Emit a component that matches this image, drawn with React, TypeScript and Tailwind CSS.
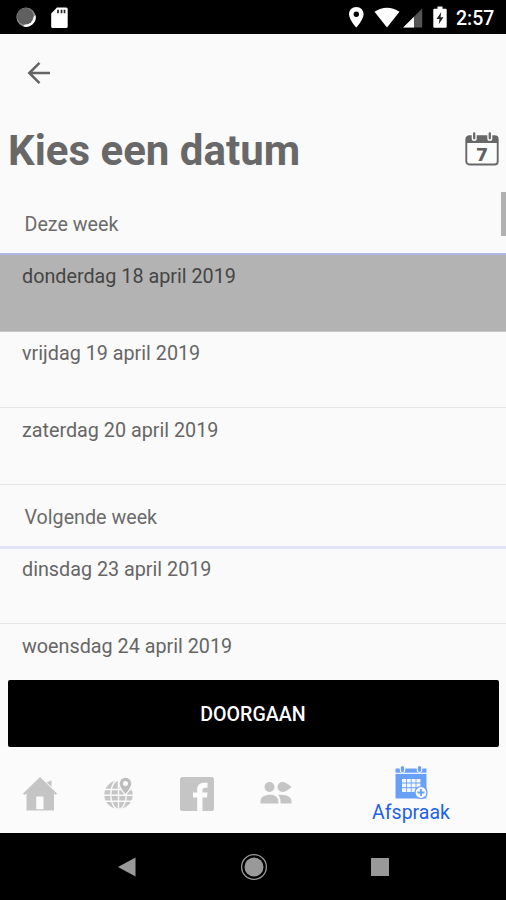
import React from "react";

function StatusBar() {
  return (
    <header className="h-[34px] shrink-0 bg-black flex items-center justify-between pl-4 pr-[10px] text-white">
      <svg width="54" height="34" viewBox="0 0 54 34">
        <circle cx="10" cy="17.2" r="9.6" fill="#8c8c8c" />
        <path d="M19.500 15A9.600 9.600 0 0 1 7 26.300Z" fill="#fff" />
        <circle cx="9.3" cy="16.3" r="8.3" fill="#606060" />
        <path d="M41 7.5H50.200Q51.700 7.500 51.700 9V26.500Q51.700 28 50.200 28H36.700Q35.200 28 35.200 26.500V13.500Z" fill="#fff" />
        <path d="M42 9.800v3.500M45.500 9.800v3.500M48.500 9.800v3.500" stroke="#222" strokeWidth="1.700" />
      </svg>
      <div className="flex items-center">
        <svg width="108" height="34" viewBox="0 0 108 34">
          <path fillRule="evenodd" d="M8.300 7C4 7 1 10.200 1 14.200C1 19.500 8.300 27.500 8.300 27.500S15.600 19.500 15.600 14.200C15.600 10.200 12.600 7 8.300 7ZM8.300 11.500A2.700 2.700 0 1 1 8.300 16.900A2.700 2.700 0 1 1 8.300 11.500Z" fill="#fff" />
          <path d="M26.500 11.800Q39 3.500 51.500 11.800L39 27.500Z" fill="#fff" />
          <path d="M74.200 8.500V27.500H55.200Z" fill="#555" />
          <path d="M66 16.700V27.500H55.200Z" fill="#fff" />
          <path d="M89.500 6.500h5v2.300h3.200q1 0 1 1v17q0 1-1 1h-11.400q-1 0-1-1v-17q0-1 1-1h3.200Z" fill="#fff" />
          <path d="M93.300 12L88.500 19h3l-.8 5.300L95.500 17.300h-3Z" fill="#222" />
        </svg>
        <span className="text-[19.500px] leading-[34px] font-medium pt-[4px] w-[40px] whitespace-nowrap">2:57</span>
      </div>
    </header>
  );
}

function CalendarSeven() {
  return (
    <svg width="34" height="34" viewBox="0 0 34 34">
      <rect x="1.300" y="4.200" width="31.400" height="28.300" rx="3" fill="#fcfcfc" stroke="#686868" strokeWidth="1.900" />
      <path d="M1 11V6.500Q1 4 4 4H30Q33 4 33 6.500V11Z" fill="#686868" />
      <path d="M9.200 1.800v4.600M24.800 1.800v4.600" stroke="#fafafa" strokeWidth="5" strokeLinecap="round" />
      <path d="M9.200 1.500v4.800M24.800 1.500v4.800" stroke="#686868" strokeWidth="2.300" strokeLinecap="round" />
      <text x="17" y="28.700" textAnchor="middle" fontWeight="700" fontSize="18" fill="#606060" className="font-['DejaVu_Sans',sans-serif]">7</text>
    </svg>
  );
}

function WeekHeader({ children }: { children: React.ReactNode }) {
  return <h2 className="h-[61px] shrink-0 pl-[24.500px] pt-[18px] text-[19.700px] leading-[30px] font-normal text-[#6b6b6b]">{children}</h2>;
}

function DayRow({ children, size = "h-[77px] pt-[7px]", selected = false }: { children: React.ReactNode; size?: string; selected?: boolean }) {
  return (
    <li className={`${size} shrink-0 pl-[22px] text-[19.750px] leading-[30px] border-b ${selected ? "bg-[#b3b3b3] border-[#c6c6c6] text-[#454545]" : "border-[#e6e6e6] text-[#666666]"}`}>
      {children}
    </li>
  );
}

function HomeIcon() {
  return (
    <svg width="36" height="36" viewBox="0 0 36 36" className="fill-[#c5c5c5]">
      <path d="M24.500 6.500L29.500 4.200V10.500Z" />
      <path fillRule="evenodd" d="M18 1L35 17.500L33.800 19L32 17.500V34.500H4.500V17.500L2.200 19L1 17.500ZM14.200 20.500V33.300H21.500V20.500Z" />
    </svg>
  );
}

function GlobeIcon() {
  return (
    <svg width="32" height="34" viewBox="0 0 32 34" fill="none">
      <circle cx="14.500" cy="17.700" r="14.200" fill="#c5c5c5" />
      <g stroke="#fafafa" strokeWidth="1.400">
        <path d="M14.500 3v30M0 12.500h31M0 18.200h31M0 24.200h31" />
        <ellipse cx="14.500" cy="17.700" rx="7.800" ry="14.500" />
      </g>
      <path d="M21.500 .8A5.800 5.800 0 0 1 27.300 6.600C27.300 10.500 21.500 17 21.500 17S15.700 10.500 15.700 6.600A5.800 5.800 0 0 1 21.500 .8Z" fill="#bdbdbd" stroke="#fafafa" strokeWidth="2.400" className="[paint-order:stroke]" />
      <circle cx="21.500" cy="6.600" r="2.500" fill="#fafafa" />
    </svg>
  );
}

function FacebookIcon() {
  return (
    <svg width="34" height="34" viewBox="0 0 34 34">
      <rect width="34" height="34" rx="2.500" fill="#c5c5c5" />
      <path d="M17.200 34V20.500H13V15.500H17.200V12.500Q17.200 5.700 24 5.700H27.500V10.700H25.300Q22.500 10.700 22.500 13V15.500H27.500L27 20.500H22.500V34Z" fill="#fcfcfc" />
    </svg>
  );
}

function PeopleIcon() {
  return (
    <svg width="32" height="24" viewBox="0 0 32 24" className="fill-[#c5c5c5]">
      <circle cx="9.500" cy="6" r="5" />
      <path d="M22.500 1Q26 1 31.500 6Q26 11 22.500 11A5 5 0 0 1 22.500 1Z" />
      <path d="M.5 22.500V20C.5 16 5 13.800 10 13.800S18.300 16.500 18.300 20V22.500Z" />
      <path d="M18 14C25.500 12.700 31.500 16 31.500 20V22.500H20.500V20.500C20.500 17.500 19.700 15.600 18 14Z" />
    </svg>
  );
}

function AppointmentIcon() {
  return (
    <svg width="34" height="35" viewBox="0 0 34 35">
      <path d="M1.500 3.500H32.500V33.500H1.500Z" fill="#68a0f7" />
      <path d="M1 8.300H33" stroke="#fafafa" strokeWidth="1.200" />
      <path d="M8.500 2v3M25.500 2v3" stroke="#fafafa" strokeWidth="5.500" strokeLinecap="round" />
      <path d="M8.500 2.500v3M25.500 2.500v3" stroke="#68a0f7" strokeWidth="3.200" strokeLinecap="round" />
      <path d="M8 15.700h18.500M8 20.400h18.500M8 25.100h18.500" stroke="#f4f8ff" strokeWidth="3.600" strokeDasharray="4 .8" />
      <circle cx="27" cy="27.500" r="6" fill="#f8faff" stroke="#68a0f7" strokeWidth="1.200" />
      <path d="M27 24v7M23.500 27.500h7" stroke="#68a0f7" strokeWidth="1.800" />
    </svg>
  );
}

function TabBar() {
  return (
    <nav className="h-[86px] shrink-0 flex items-start bg-[#fbfbfb]">
      <button className="ml-[22px] mt-[29px]"><HomeIcon /></button>
      <button className="ml-[46px] mt-[30px]"><GlobeIcon /></button>
      <button className="ml-[44px] mt-[30px]"><FacebookIcon /></button>
      <button className="ml-[46px] mt-[34px]"><PeopleIcon /></button>
      <button className="ml-[76px] mt-[18px] w-[86px] flex flex-col items-center text-[#1f62e8]">
        <AppointmentIcon />
        <span className="text-[19.500px] leading-[26px]">Afspraak</span>
      </button>
    </nav>
  );
}

function SystemBar() {
  return (
    <footer className="h-[67px] shrink-0 bg-black flex items-center justify-between pl-[118px] pr-[117px]">
      <svg width="18" height="20" viewBox="0 0 18 20"><path d="M0 10L17.500 .5V19.500Z" fill="#999" /></svg>
      <svg width="28" height="28" viewBox="0 0 28 28">
        <circle cx="14" cy="14" r="12.400" fill="none" stroke="#999" strokeWidth="1.300" />
        <circle cx="14" cy="14" r="9.500" fill="#999" />
      </svg>
      <div className="size-[18px] bg-[#999]" />
    </footer>
  );
}

export default function App() {
  return (
    <main className="w-[506px] h-[900px] overflow-hidden flex flex-col bg-[#fafafa] font-['Roboto','Noto_Sans',sans-serif]">
      <StatusBar />
      <div className="h-[78px] shrink-0 flex items-center pl-[27px]">
        <svg width="24" height="24" viewBox="0 0 24 24" fill="none" stroke="#646464" strokeWidth="2.500">
          <path d="M23 12H2.500M12.500 1.800L2.300 12L12.500 22.200" />
        </svg>
      </div>
      <div className="h-[80px] shrink-0 flex items-start justify-between pl-2 pr-[7px]">
        <h1 className="mt-[14px] text-[42px] leading-[50px] font-bold text-[#686868] whitespace-nowrap">Kies een datum</h1>
        <div className="mt-[20px]"><CalendarSeven /></div>
      </div>
      <section className="relative h-[488px] shrink-0 overflow-hidden flex flex-col">
        <div className="absolute right-0 top-0 w-[5px] h-[44px] bg-[#b0b0b0]" />
        <WeekHeader>Deze week</WeekHeader>
        <ul className="border-t-2 border-[#b0b9e5]">
          <DayRow selected>donderdag 18 april 2019</DayRow>
          <DayRow size="h-[76px] pt-[7px]">vrijdag 19 april 2019</DayRow>
          <DayRow size="h-[77px] pt-[8px]">zaterdag 20 april 2019</DayRow>
        </ul>
        <WeekHeader>Volgende week</WeekHeader>
        <ul className="border-t-[3px] border-[#e2e2fa]">
          <DayRow size="h-[75px] pt-[6px]">dinsdag 23 april 2019</DayRow>
          <DayRow size="h-[77px] pt-[8px]">woensdag 24 april 2019</DayRow>
        </ul>
      </section>
      <button className="mx-[7.500px] h-[67px] shrink-0 rounded-[2px] bg-black text-white text-[19.600px] font-medium pt-[3px]">DOORGAAN</button>
      <TabBar />
      <SystemBar />
    </main>
  );
}
